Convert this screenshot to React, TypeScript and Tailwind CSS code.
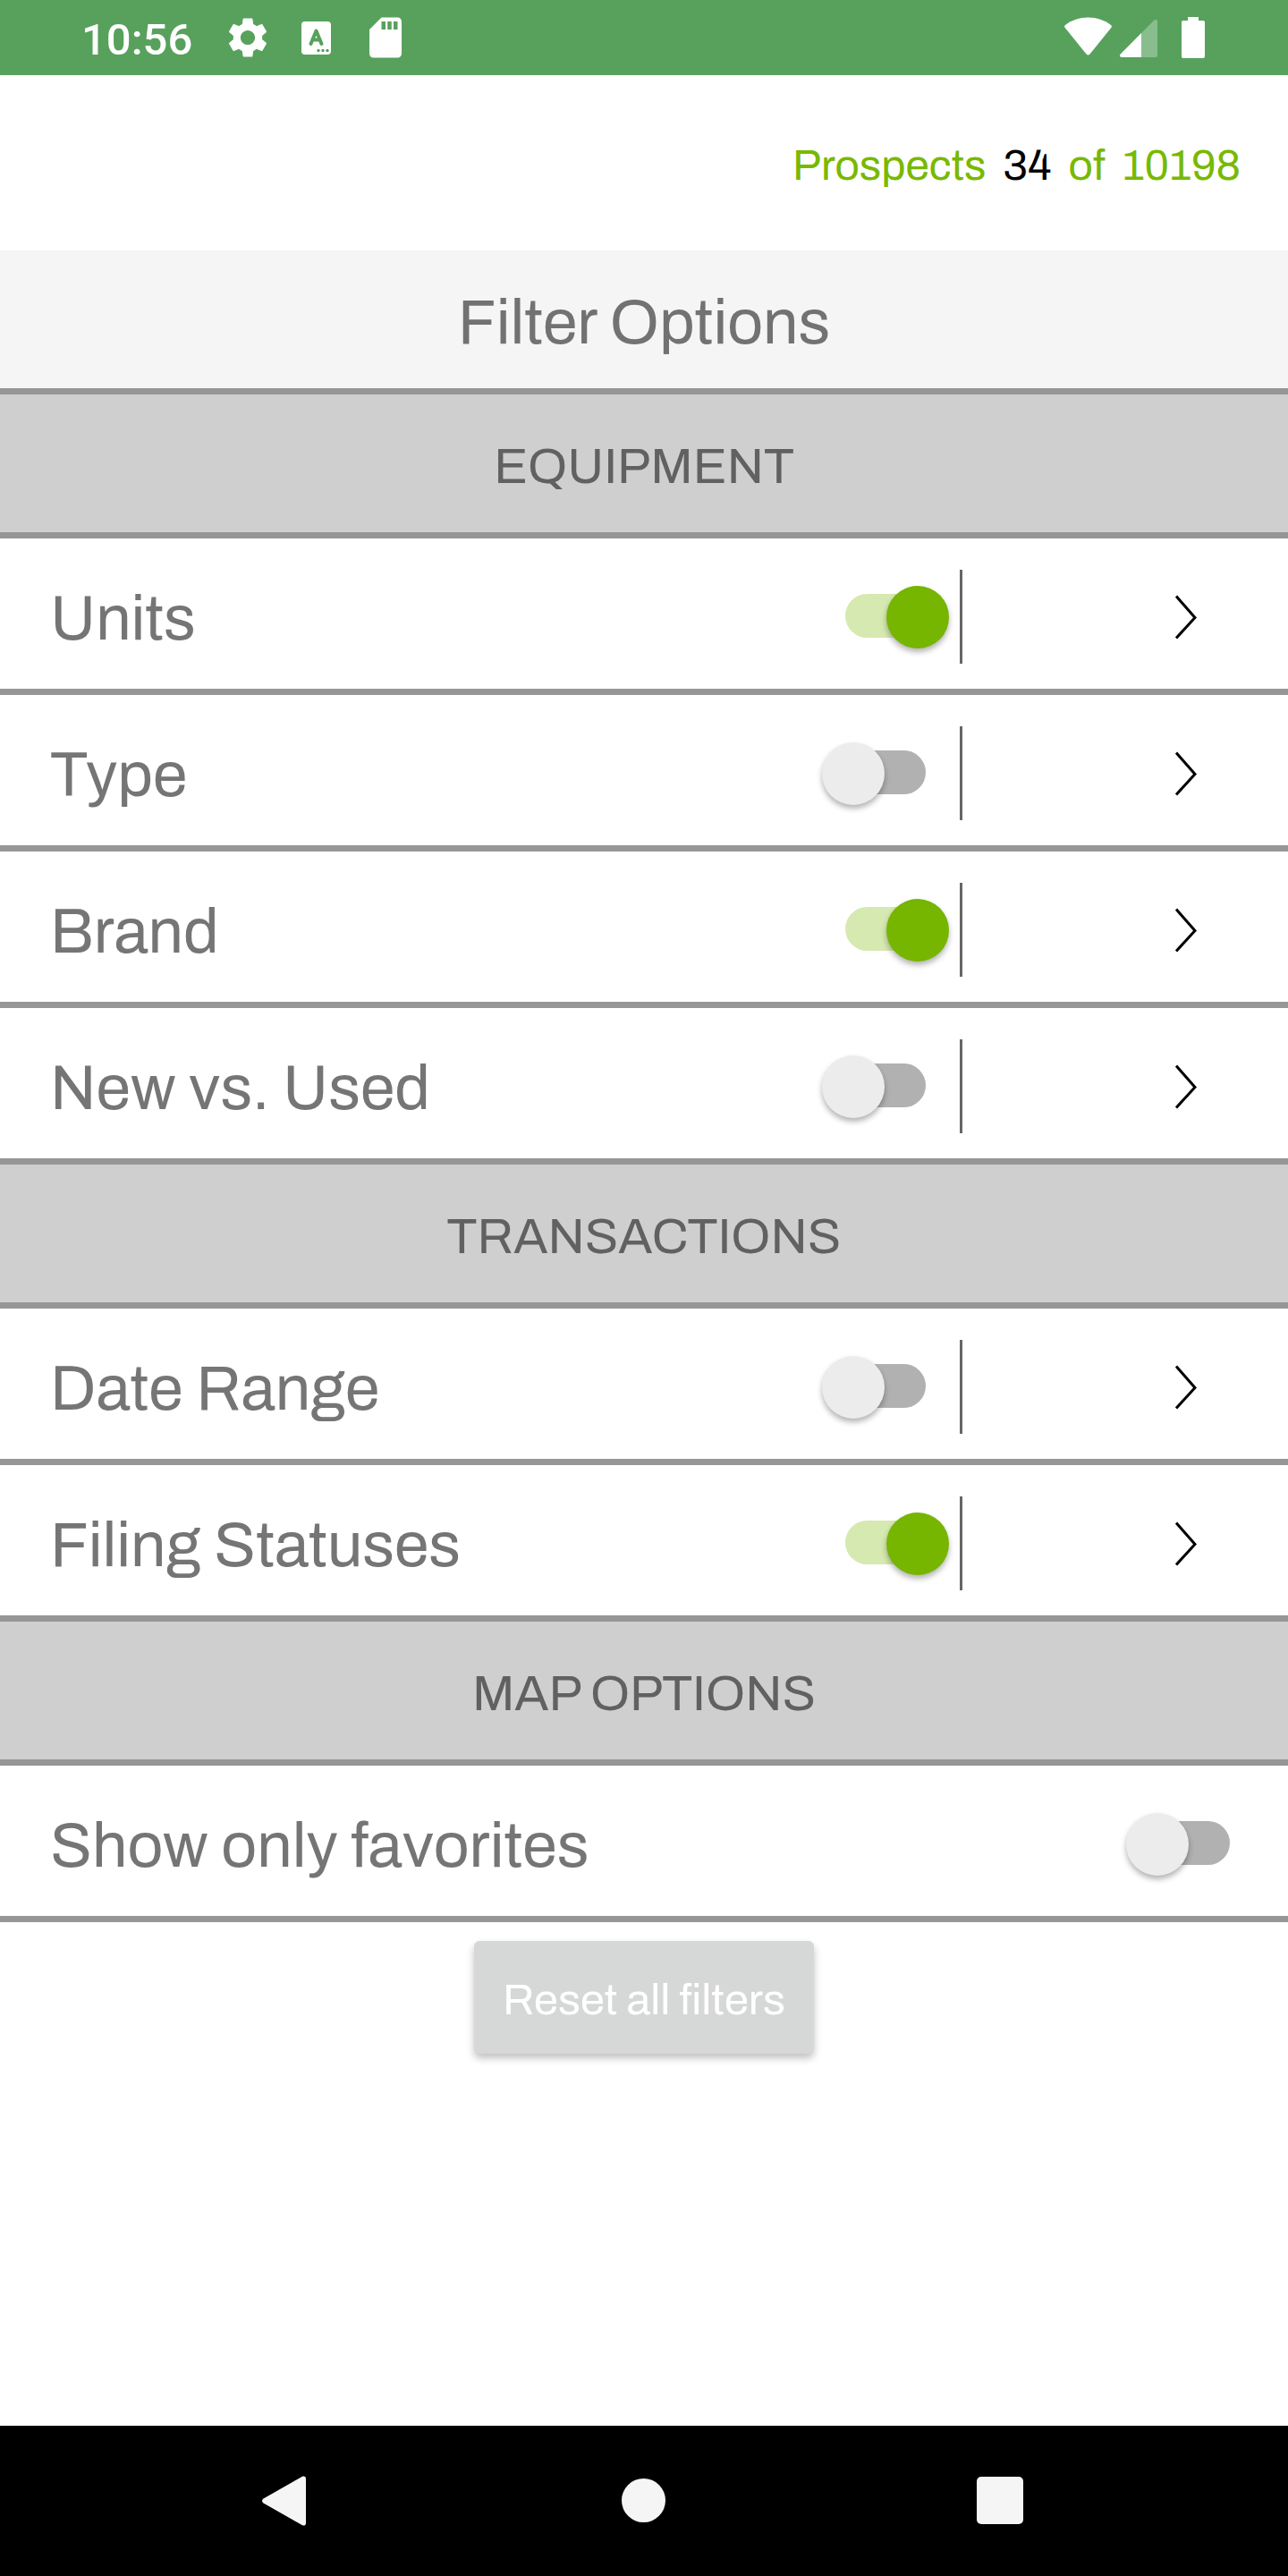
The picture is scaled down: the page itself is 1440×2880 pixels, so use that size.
import React, { useState } from 'react'
import { MdSdCard, MdSettings } from 'react-icons/md'
import clsx from 'clsx'

interface Filter {
  id: string
  label: string
  hasDetails: boolean
}

interface Section {
  title: string
  filters: Filter[]
}

const SECTIONS: Section[] = [
  {
    title: 'EQUIPMENT',
    filters: [
      { id: 'units', label: 'Units',        hasDetails: true },
      { id: 'type',  label: 'Type',         hasDetails: true },
      { id: 'brand', label: 'Brand',        hasDetails: true },
      { id: 'new',   label: 'New vs. Used', hasDetails: true },
    ],
  },
  {
    title: 'TRANSACTIONS',
    filters: [
      { id: 'date',   label: 'Date Range',      hasDetails: true },
      { id: 'status', label: 'Filing Statuses', hasDetails: true },
    ],
  },
  {
    title: 'MAP OPTIONS',
    filters: [
      { id: 'favorites', label: 'Show only favorites', hasDetails: false },
    ],
  },
]

const INITIAL: Record<string, boolean> = { units: true, brand: true, status: true }

function StatusBar() {
  return (
    <div className="flex h-[84px] items-center justify-between bg-[#57a15c] pl-[91px] pr-[93px] text-white">
      <div className="flex items-center gap-[23px]">
        <span className="mr-3 pt-1 font-[Roboto,sans-serif] text-[49px] leading-none font-medium">10:56</span>
        <MdSettings className="size-[54px]" />
        <svg viewBox="0 0 54 54" className="size-[54px]" fill="none">
          <rect x="10" y="9" width="33" height="37" rx="4" fill="currentColor" />
          <path d="M20.5 34 26.5 19.5 32.5 34M22.5 29.5h8" stroke="#57a15c" strokeWidth="4" strokeLinecap="round" strokeLinejoin="round" />
          <g fill="#57a15c">
            <circle cx="29" cy="41.5" r="1.7" />
            <circle cx="34" cy="41.5" r="1.7" />
            <circle cx="39" cy="41.5" r="1.7" />
          </g>
        </svg>
        <MdSdCard className="size-[54px]" />
      </div>
      <div className="flex items-center">
        <svg viewBox="0 0 53 46" className="mr-[9px] h-[46px] w-[53px]" fill="currentColor">
          <path d="M1 9C8 3.500 17 .5 26.500 .5S45 3.500 52 9c1 .8 1.200 1.700.5 2.700L28.500 41.500c-1.200 1.400-2.800 1.400-4 0L.5 11.700C-.2 10.700 0 9.800 1 9z" />
        </svg>
        <svg viewBox="0 0 42 46" className="mr-[27px] h-[46px] w-[42px]" fill="currentColor">
          <path opacity=".3" d="M24 18 38.500 3.500C40 2.300 42 3 42 5v38c0 1.200-.8 2-2 2H24z" />
          <path d="M24 18v27H2C0 45-.7 43 .7 41.500z" />
        </svg>
        <svg viewBox="0 0 26 46" className="h-[46px] w-[26px]" fill="currentColor">
          <path d="M7 0h12v4h5c1.200 0 2 .8 2 2v38c0 1.200-.8 2-2 2H2c-1.200 0-2-.8-2-2V6c0-1.200.8-2 2-2h5z" />
        </svg>
      </div>
    </div>
  )
}

interface ToggleProps {
  id: string
  checked: boolean
  onChange: () => void
}

function Toggle({ id, checked, onChange }: ToggleProps) {
  return (
    <span className="relative flex h-[70px] w-[142px] shrink-0 items-center justify-center">
      <input
        id={id}
        type="checkbox"
        role="switch"
        checked={checked}
        onChange={onChange}
        className="peer absolute inset-0 z-10 size-full cursor-pointer opacity-0"
      />
      <span className="mb-[2px] h-[49px] w-[90px] rounded-full bg-[#b1b1b1] peer-checked:bg-[#d6e9b0]" />
      <span
        className={clsx(
          'absolute top-0 size-[70px] rounded-full shadow-[0_4px_6px_rgba(0,0,0,0.3)]',
          checked ? 'right-0 bg-[#76b500]' : 'left-0 bg-[#ececec]',
        )}
      />
    </span>
  )
}

interface FilterRowProps {
  filter: Filter
  checked: boolean
  onToggle: () => void
}

function FilterRow({ filter, checked, onToggle }: FilterRowProps) {
  return (
    <li className="flex h-[175px] items-center border-b-[7px] border-[#969696] bg-white pt-[7px] pl-14">
      <label htmlFor={filter.id} className="flex-1 pt-1 text-[70px] leading-none text-[#757575]">
        {filter.label}
      </label>
      <Toggle id={filter.id} checked={checked} onChange={onToggle} />
      {filter.hasDetails ? (
        <button
          type="button"
          aria-label={`${filter.label} options`}
          className="ml-3 flex h-[105px] w-[367px] cursor-pointer items-center justify-end border-l-[3px] border-[#666666] pr-[102px]"
        >
          <svg viewBox="0 0 24 50" className="h-[50px] w-6" fill="none" stroke="black" strokeWidth="3">
            <path d="M1 1.500 22 25.500 1 48.500" />
          </svg>
        </button>
      ) : (
        <span className="w-[39px]" />
      )}
    </li>
  )
}

function NavBar() {
  return (
    <nav className="mt-auto grid h-[168px] grid-cols-3 items-center justify-items-center bg-black px-[120px] text-[#f5f5f5]">
      <button type="button" aria-label="Back">
        <svg viewBox="0 0 56 56" className="size-14" fill="currentColor">
          <path d="M2.500 25.500 46 .8C48 -.2 50 .8 50 3v50c0 2.200-2 3.200-4 2.200L2.500 30.500C.5 29 .5 27 2.500 25.500z" />
        </svg>
      </button>
      <button type="button" aria-label="Home">
        <svg viewBox="0 0 56 56" className="size-14" fill="currentColor">
          <circle cx="27.500" cy="27.500" r="24.500" />
        </svg>
      </button>
      <button type="button" aria-label="Recent apps">
        <svg viewBox="0 0 56 56" className="size-14" fill="currentColor">
          <rect x="0" y="1" width="52" height="53" rx="5" />
        </svg>
      </button>
    </nav>
  )
}

export default function App() {
  const [enabled, setEnabled] = useState(INITIAL)

  function toggle(id: string) {
    setEnabled((prev) => ({ ...prev, [id]: !prev[id] }))
  }

  return (
    <div className="flex min-h-screen flex-col bg-white font-[Archivo,'Liberation_Sans',Arial,sans-serif]">
      <StatusBar />

      {/* Prospect count */}
      <header className="flex h-[196px] items-center justify-end gap-[19px] pt-1.5 pr-[53px] text-[48px] leading-none text-[#78b900]">
        <span>Prospects</span>
        <span className="text-black">34</span>
        <span>of</span>
        <span>10198</span>
      </header>

      <main>
        <h1 className="flex h-[161px] items-center justify-center border-b-[7px] border-[#969696] bg-[#f5f5f5] pt-2 text-[70px] leading-none text-[#727272]">
          Filter Options
        </h1>

        {SECTIONS.map((section) => (
          <section key={section.title}>
            <h2 className="flex h-[161px] items-center justify-center border-b-[7px] border-[#969696] bg-[#cfcfcf] pt-2 text-[56px] leading-none text-[#616161]">
              {section.title}
            </h2>
            <ul>
              {section.filters.map((f) => (
                <FilterRow
                  key={f.id}
                  filter={f}
                  checked={!!enabled[f.id]}
                  onToggle={() => toggle(f.id)}
                />
              ))}
            </ul>
          </section>
        ))}

        <div className="flex justify-center pt-[21px]">
          <button
            type="button"
            onClick={() => setEnabled({})}
            className="h-[126px] cursor-pointer rounded-md bg-[#d6d8d7] px-8 pt-1 text-[49px] leading-none text-white shadow-[0_5px_8px_rgba(0,0,0,0.25)]"
          >
            Reset all filters
          </button>
        </div>
      </main>

      <NavBar />
    </div>
  )
}
